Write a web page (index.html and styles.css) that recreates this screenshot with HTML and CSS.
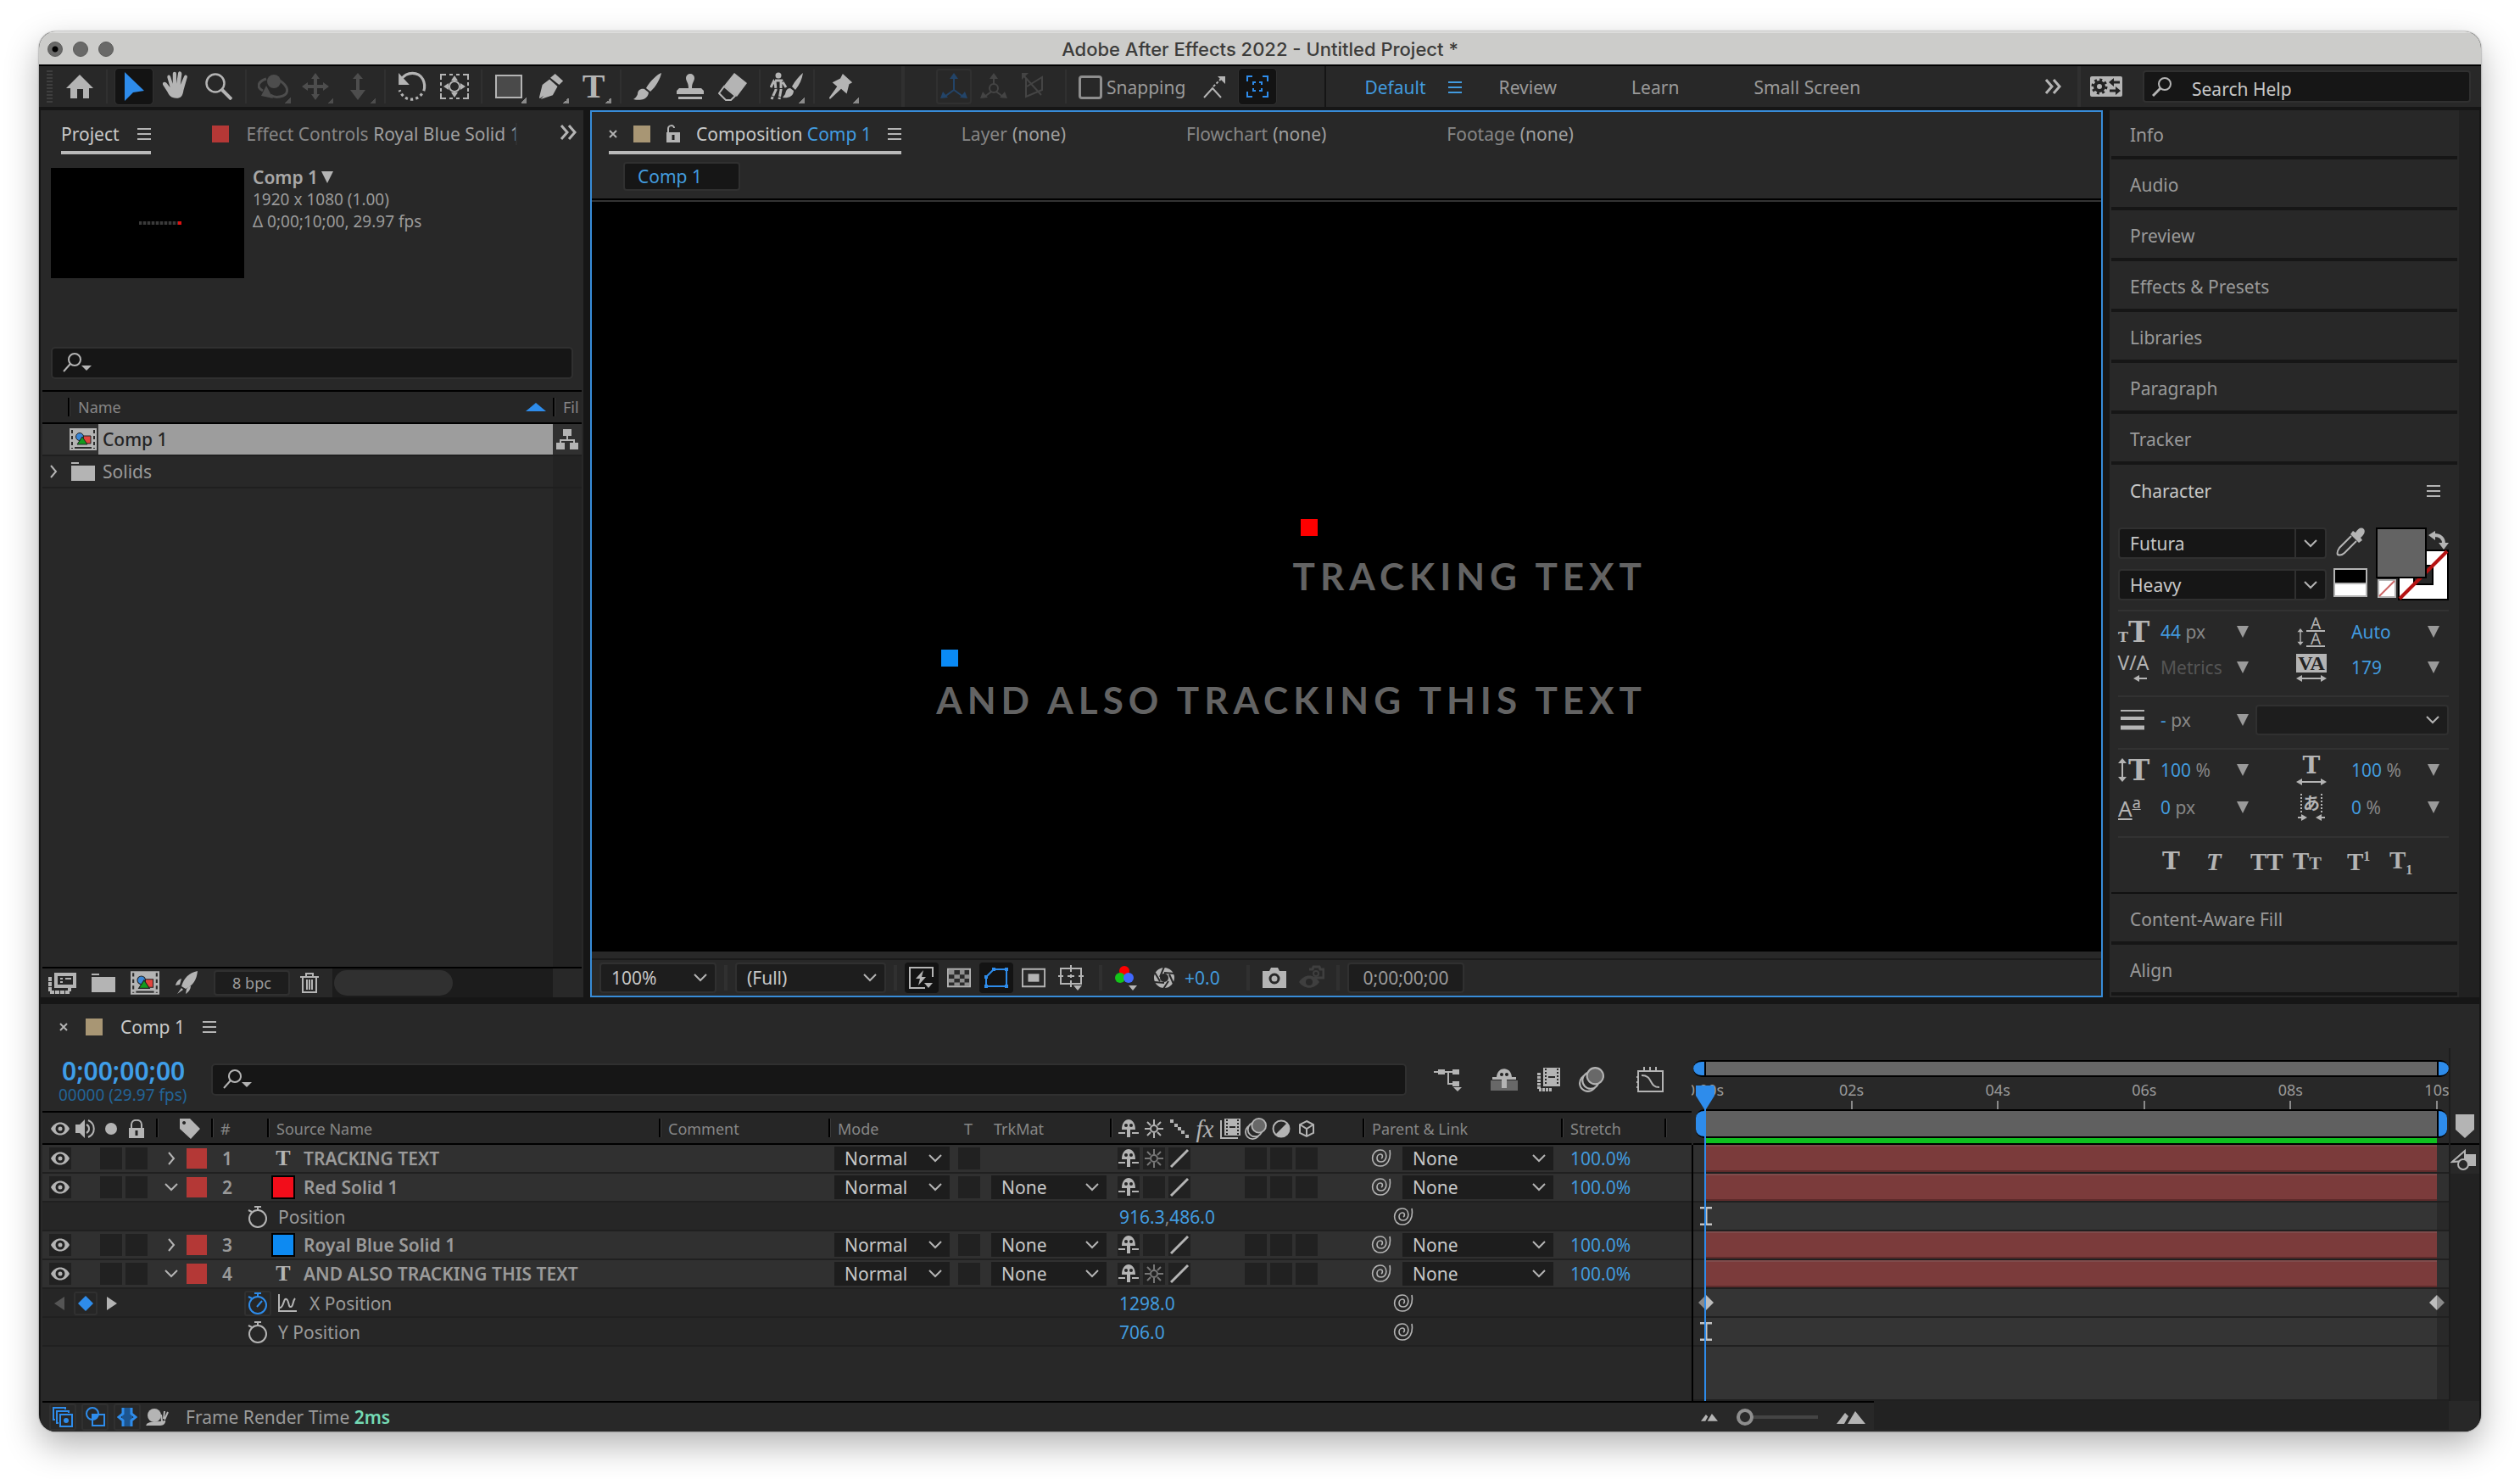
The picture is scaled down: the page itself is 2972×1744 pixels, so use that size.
FILE: index.html
```html
<!DOCTYPE html>
<html lang="en">
<head>
<meta charset="utf-8">
<meta name="viewport" content="width=device-width, initial-scale=1">
<title>Adobe After Effects 2022 - Untitled Project *</title>
<link rel="stylesheet" href="styles.css">
</head>
<body>
<svg class="defs" aria-hidden="true">
  <symbol id="chev" viewBox="0 0 16 16"><path d="M1 4l7 7 7-7" fill="none" stroke="currentColor" stroke-width="2"/></symbol>
  <symbol id="chev-r" viewBox="0 0 16 16"><path d="M5 1l6 7-6 7" fill="none" stroke="currentColor" stroke-width="2"/></symbol>
  <symbol id="menu" viewBox="0 0 16 16"><path d="M0 2h16M0 8h16M0 14h16" stroke="currentColor" stroke-width="2"/></symbol>
  <symbol id="tri" viewBox="0 0 12 12"><path d="M0 0h12L6 12z" fill="currentColor"/></symbol>
  <symbol id="close" viewBox="0 0 10 10"><path d="M1 1l8 8M9 1l-8 8" stroke="currentColor" stroke-width="2"/></symbol>
  <symbol id="more" viewBox="0 0 20 18"><path d="M2 1l7 8-7 8M11 1l7 8-7 8" fill="none" stroke="currentColor" stroke-width="3"/></symbol>
  <symbol id="mag" viewBox="0 0 34 24"><circle cx="14" cy="8" r="7" fill="none" stroke="currentColor" stroke-width="2"/><path d="M9 13L1 22" stroke="currentColor" stroke-width="2"/><path d="M22 15h12l-6 6z" fill="currentColor"/></symbol>
  <symbol id="find" viewBox="0 0 24 24"><circle cx="15" cy="9" r="7" fill="none" stroke="currentColor" stroke-width="2"/><path d="M10 14L1 23" stroke="currentColor" stroke-width="3"/></symbol>
  <symbol id="home" viewBox="0 0 32 32"><path d="M16 2l16 16h-5v12h-7v-11h-7v11H5V18H0z" fill="currentColor"/></symbol>
  <symbol id="arrow" viewBox="0 0 32 36"><path d="M5 1l23 22-13 2-10 10z" fill="currentColor"/></symbol>
  <symbol id="hand" viewBox="0 0 32 34"><path d="M9 18L6 7c-.5-3 2.500-4 3.500-1L12 14V3c0-3 4-3 4 0v11l2-12c.5-3 4-2 4 1l-1.500 12 4-9c1-3 4.500-1.500 3.500 1l-4 14c-1 7-3 9-8 9-6 0-8-3-10-7l-5-8c-1-3 2-4 4-2z" fill="currentColor"/></symbol>
  <symbol id="zoomt" viewBox="0 0 32 32"><circle cx="12" cy="12" r="10.500" fill="none" stroke="currentColor" stroke-width="2.500"/><path d="M20 20l11 11" stroke="currentColor" stroke-width="4"/></symbol>
  <symbol id="orbit" viewBox="0 0 36 32"><circle cx="19" cy="10" r="8" fill="currentColor"/><path d="M10 7c-10 3-12 10-4 14M26 9c12 8 11 17 0 19-4 1-8 0-11-2" fill="none" stroke="currentColor" stroke-width="3"/><path d="M10 15l8 15-14-3z" fill="currentColor"/></symbol>
  <symbol id="pan" viewBox="0 0 32 32"><path d="M16 0l5 7h-3v7h7v-3l7 5-7 5v-3h-7v7h3l-5 7-5-7h3v-7H7v3l-7-5 7-5v3h7V7h-3z" fill="currentColor"/></symbol>
  <symbol id="dolly" viewBox="0 0 32 32"><path d="M16 0l6 7h-4v13h7l-9 12-9-12h7V7h-4z" fill="currentColor"/></symbol>
  <symbol id="rotate" viewBox="0 0 34 34"><path d="M5 9C11 0 24 0 29 9c3 6 2 10 1 13" fill="none" stroke="currentColor" stroke-width="3"/><path d="M2 2v13h12z" fill="currentColor"/><path d="M28 25c-6 9-20 9-25-4" fill="none" stroke="currentColor" stroke-width="3" stroke-dasharray="3 3"/></symbol>
  <symbol id="anchor" viewBox="0 0 34 32"><path d="M1 8V2h6M27 2h6v6M33 24v6h-6M7 30H1v-6M11 2h4M19 2h4M11 30h4M19 30h4M1 11v4M1 18v4M33 11v4M33 18v4" fill="none" stroke="currentColor" stroke-width="2"/><circle cx="17" cy="16" r="6" fill="none" stroke="currentColor" stroke-width="2"/><path d="M17 3l4 6h-8zM17 29l4-6h-8zM4 16l6-4v8zM30 16l-6-4v8z" fill="currentColor"/></symbol>
  <symbol id="rect" viewBox="0 0 32 32"><path d="M1 3h30v26H1z" fill="#4a4a4a" stroke="currentColor" stroke-width="2"/></symbol>
  <symbol id="pen" viewBox="0 0 32 34"><path d="M21 1l10 9-5 5-11-9zM14 8l10 9-6 11L3 33l9-11a3 3 0 1 1 2 1L2 32 1 31l4-16z" fill="currentColor"/></symbol>
  <symbol id="brush" viewBox="0 0 34 34"><path d="M33 1c-4 1-14 10-18 18l5 4C27 17 32 7 33 1zM13 20c-5-1-8 2-8 6-1 3-3 5-5 6 7 2 17 1 18-8z" fill="currentColor"/></symbol>
  <symbol id="stamp" viewBox="0 0 32 32"><path d="M11 6a5 5 0 1 1 10 0c0 4-3 5-3 12h11l3 3v4H0v-4l3-3h11c0-7-3-8-3-12zM2 28h28v3H2z" fill="currentColor"/></symbol>
  <symbol id="eraser" viewBox="0 0 34 34"><path d="M19 1l15 12-12 16L7 16z" fill="currentColor"/><path d="M7 17l13 11-5 5H9l-8-8z" fill="none" stroke="currentColor" stroke-width="2"/></symbol>
  <symbol id="roto" viewBox="0 0 40 34"><circle cx="10" cy="4" r="3.500" fill="currentColor"/><path d="M1 18l4-8h9l5 8M6 10l1 11-5 11M13 10v11l-2 11" fill="none" stroke="currentColor" stroke-width="3" stroke-dasharray="9 1"/><path d="M39 1c-5 4-9 9-13 16l4 4c5-6 8-13 9-20zM24 19c-4 0-5 3-6 7l-3 4c6 1 13-1 13-8z" fill="currentColor"/></symbol>
  <symbol id="pin" viewBox="0 0 32 34"><path d="M18 1l12 11-4 2-3 12-7-6L2 33l-1-2 10-14-6-5 10-5z" fill="currentColor"/></symbol>
  <symbol id="ax1" viewBox="0 0 32 32"><path d="M16 5v15L5 28M16 20l11 8" fill="none" stroke="currentColor" stroke-width="2"/><path d="M16 0l5 7H11zM0 30l3-8 6 7zM32 30l-3-8-6 7z" fill="currentColor"/></symbol>
  <symbol id="ax2" viewBox="0 0 32 32"><use href="#ax1"/><circle cx="16" cy="18" r="5" fill="#282828" stroke="currentColor" stroke-width="2"/></symbol>
  <symbol id="ax3" viewBox="0 0 32 32"><path d="M7 6v22l19-8V5L8 16M5 4l20 22" fill="none" stroke="currentColor" stroke-width="2"/><path d="M2 0h8l-8 8z" fill="currentColor"/></symbol>
  <symbol id="snapa" viewBox="0 0 26 28"><path d="M1 27l10-11 10 11" fill="none" stroke="currentColor" stroke-width="2"/><path d="M12 14l9-9" stroke="currentColor" stroke-width="2" stroke-dasharray="3 2"/><path d="M17 2h9v9z" fill="currentColor"/></symbol>
  <symbol id="snapb" viewBox="0 0 26 26"><path d="M1 7V1h6M19 1h6v6M25 19v6h-6M7 25H1v-6M8 11V8h3M15 8h3v3M18 15v3h-3M11 18H8v-3" fill="none" stroke="currentColor" stroke-width="2"/></symbol>
  <symbol id="gears" viewBox="0 0 38 24"><rect width="38" height="24" rx="2" fill="#b4b4b4"/><circle cx="11" cy="12" r="5" fill="none" stroke="#222" stroke-width="4"/><circle cx="11" cy="12" r="8" fill="none" stroke="#222" stroke-width="3" stroke-dasharray="3 3.280"/><path d="M35 7h-7M23 17h7" stroke="#222" stroke-width="3"/><path d="M22 7l6-5v10zM36 17l-6-5v10z" fill="#222"/></symbol>
  <symbol id="unlock" viewBox="0 0 16 22"><path d="M2 10V5c0-5 7-5 7-1" fill="none" stroke="currentColor" stroke-width="2"/><path d="M0 9h16v12H0z" fill="currentColor"/><path d="M8 12v6" stroke="#222" stroke-width="3"/></symbol>
  <symbol id="lock" viewBox="0 0 20 22"><path d="M4 10V6c0-7 12-7 12 0v4" fill="none" stroke="currentColor" stroke-width="2"/><path d="M1 10h18v12H1z" fill="currentColor"/><path d="M10 13v6" stroke="#222" stroke-width="3"/></symbol>
  <symbol id="comp" viewBox="0 0 32 26"><path d="M0 0h32v26H0z" fill="#b4b4b4"/><path d="M3 2v22M29 2v22" stroke="#2b2b2b" stroke-width="2" stroke-dasharray="4 3"/><path d="M6 23h20" stroke="#2b2b2b" stroke-width="2"/><path d="M16 9h9v9h-9z" fill="#e2443e" stroke="#222"/><circle cx="12" cy="10" r="4.500" fill="#3a86d6" stroke="#222"/><path d="M15 10l6 9H9z" fill="#149a1e" stroke="#222"/></symbol>
  <symbol id="folder" viewBox="0 0 28 24"><path d="M0 1h9v2H0zM0 5h28v18H0z" fill="currentColor"/></symbol>
  <symbol id="flow" viewBox="0 0 26 24"><path d="M8 0h10v8H8zM0 16h10v8H0zM16 16h10v8H16z" fill="currentColor"/><path d="M13 8v4M5 16v-3h16v3" fill="none" stroke="currentColor" stroke-width="2"/></symbol>
  <symbol id="interp" viewBox="0 0 34 26"><path d="M10 3h22v14H10z" fill="none" stroke="currentColor" stroke-width="4"/><path d="M15 8h3M15 12h3M21 8h7" stroke="currentColor" stroke-width="2"/><path d="M3 6v18h23v-5" fill="none" stroke="currentColor" stroke-width="4" stroke-dasharray="5 1"/></symbol>
  <symbol id="rocket" viewBox="0 0 26 28"><path d="M26 0C16 2 10 8 7 18l5 3C21 17 25 10 26 0zM7 9c-4 1-6 4-7 8l5-1zM18 17c0 5-3 8-6 10l1-6zM7 20l-5 7 7-5z" fill="currentColor"/></symbol>
  <symbol id="trash" viewBox="0 0 22 26"><path d="M0 6h22M7 5V2h8v3" fill="none" stroke="currentColor" stroke-width="2"/><path d="M3 7v17h16V7M8 9v12M11 9v12M14 9v12" fill="none" stroke="currentColor" stroke-width="2"/></symbol>
  <symbol id="bolt" viewBox="0 0 30 26"><path d="M28 12V1H1v24h18" fill="none" stroke="currentColor" stroke-width="2"/><path d="M17 4L8 14h5l-2 8 9-10h-5z" fill="currentColor"/><path d="M18 19h10l-5 6z" fill="currentColor"/></symbol>
  <symbol id="checker" viewBox="0 0 30 24"><path d="M1 1h28v22H1z" fill="#2a2a2a" stroke="currentColor" stroke-width="2"/><path d="M2 2h7v6H2zM16 2h6v6h-6zM9 8h7v5H9zM22 8h6v5h-6zM2 13h7v5H2zM16 13h6v5h-6zM9 18h7v4H9zM22 18h6v4h-6z" fill="#8f8f8f"/></symbol>
  <symbol id="mask" viewBox="0 0 30 26"><path d="M3 23V12L12 3h15v20z" fill="none" stroke="currentColor" stroke-width="2"/><path d="M1 21h4v4H1zM1 10h4v4H1zM10 1h4v4h-4zM25 1h4v4h-4zM25 21h4v4h-4z" fill="currentColor"/></symbol>
  <symbol id="roi" viewBox="0 0 30 24"><path d="M1 1h28v22H1z" fill="none" stroke="currentColor" stroke-width="2"/><path d="M8 7h14v10H8z" fill="currentColor"/></symbol>
  <symbol id="guides" viewBox="0 0 30 30"><path d="M3 4h24v18H3zM15 0v8M15 11v4M15 18v8M0 13h6M11 13h8M24 13h6" fill="none" stroke="currentColor" stroke-width="2"/><path d="M18 24h10l-5 6z" fill="currentColor"/></symbol>
  <symbol id="rgb" viewBox="0 0 28 30"><circle cx="11" cy="7" r="6" fill="#f00"/><circle cx="6" cy="15" r="6" fill="#14c41a"/><circle cx="16" cy="15" r="6" fill="#4169ff"/><path d="M16 24h10l-5 6z" fill="#b4b4b4"/></symbol>
  <symbol id="aperture" viewBox="0 0 26 26"><circle cx="13" cy="13" r="8.500" fill="none" stroke="currentColor" stroke-width="7"/><path d="M13 0l-5 12M25 8L13 7M24 20l-5-11M12 26l6-9M1 18l12 1M2 7l6 10" stroke="#282828" stroke-width="2"/></symbol>
  <symbol id="camera" viewBox="0 0 28 24"><path d="M0 4h8l2-4h8l2 4h8v20H0z" fill="currentColor"/><circle cx="14" cy="13" r="5" fill="none" stroke="#282828" stroke-width="3"/></symbol>
  <symbol id="camghost" viewBox="0 0 30 28"><path d="M12 4h4l1-3h7l1 3h4v10H18" fill="none" stroke="currentColor" stroke-width="3"/><circle cx="20" cy="9" r="3" fill="none" stroke="currentColor" stroke-width="2"/><path d="M0 19c6-10 18-10 24 0-6 9-18 9-24 0z" fill="currentColor"/><circle cx="12" cy="19" r="4" fill="#282828"/></symbol>
  <symbol id="mini" viewBox="0 0 34 28"><path d="M0 5h8M12 5h10M17 5v14h6" fill="none" stroke="currentColor" stroke-width="2"/><path d="M5 2h8v6H5zM22 2h8v6h-8zM22 16h8v6h-8z" fill="currentColor"/><path d="M23 23h10l-5 5z" fill="currentColor"/></symbol>
  <symbol id="shy" viewBox="0 0 24 24"><path d="M4 13C4-3 20-3 20 13h-6v9h-4v-9z" fill="currentColor"/><circle cx="9" cy="8" r="2" fill="#222"/><circle cx="15" cy="8" r="2" fill="#222"/><path d="M0 17h8M16 17h8" stroke="currentColor" stroke-width="2"/></symbol>
  <symbol id="shybig" viewBox="0 0 32 26"><path d="M0 14h32v12H0z" fill="#686868"/><path d="M2 13v-3h5C8-3 24-3 25 10h5v3H19v10h-6V13z" fill="currentColor"/><circle cx="13" cy="7" r="2" fill="#222"/><circle cx="19" cy="7" r="2" fill="#222"/></symbol>
  <symbol id="film" viewBox="0 0 28 28"><path d="M8 0h20v22H8z" fill="currentColor"/><path d="M11 1v20M25 1v20" stroke="#282828" stroke-width="2" stroke-dasharray="2 2"/><path d="M14 11h8" stroke="#282828" stroke-width="2"/><path d="M3 6v20h16" fill="none" stroke="currentColor" stroke-width="4" stroke-dasharray="3 1"/></symbol>
  <symbol id="filmsm" viewBox="0 0 26 26"><path d="M6 1h19v20H6z" fill="currentColor"/><path d="M9 2v18M22 2v18" stroke="#282828" stroke-width="2" stroke-dasharray="2 2"/><path d="M12 11h7" stroke="#282828" stroke-width="2"/><path d="M2 3v21h20" fill="none" stroke="currentColor" stroke-width="2"/></symbol>
  <symbol id="blur" viewBox="0 0 28 28"><circle cx="10" cy="18" r="9" fill="none" stroke="currentColor" stroke-width="2"/><circle cx="13" cy="15" r="9" fill="#282828" stroke="currentColor" stroke-width="2"/><circle cx="18" cy="10" r="9" fill="#686868" stroke="currentColor" stroke-width="2"/></symbol>
  <symbol id="graph" viewBox="0 0 32 30"><path d="M2 5h29v24H2zM9 0v5M16 0v5M23 0v5M0 12h3M0 18h3M0 24h3" fill="none" stroke="currentColor" stroke-width="2"/><path d="M6 10c14 0 8 14 21 14" fill="none" stroke="currentColor" stroke-width="2"/></symbol>
  <symbol id="eye" viewBox="0 0 22 16"><path d="M0 8C5-2 17-2 22 8c-5 10-17 10-22 0z" fill="currentColor"/><circle cx="11" cy="8" r="4" fill="#b4b4b4" stroke="#222" stroke-width="3"/></symbol>
  <symbol id="speaker" viewBox="0 0 24 22"><path d="M0 6h5l6-6v22l-6-6H0z" fill="currentColor"/><path d="M13 6c4 2 4 8 0 10M15 1c9 4 9 16 0 20" fill="none" stroke="currentColor" stroke-width="2"/></symbol>
  <symbol id="dot" viewBox="0 0 14 14"><circle cx="7" cy="7" r="7" fill="currentColor"/></symbol>
  <symbol id="tag" viewBox="0 0 24 24"><path d="M0 0h12l12 12-11 12L0 12zM5 3a2 2 0 1 0 .1 0z" fill="currentColor" fill-rule="evenodd"/></symbol>
  <symbol id="sun" viewBox="0 0 22 22"><circle cx="11" cy="11" r="4" fill="none" stroke="currentColor" stroke-width="2"/><path d="M11 0v6M11 16v6M0 11h6M16 11h6M3 3l4 4M15 15l4 4M19 3l-4 4M3 19l4-4" stroke="currentColor" stroke-width="2"/></symbol>
  <symbol id="dots" viewBox="0 0 22 22"><path d="M0 0h4v4H0zM5 5h4v4H5zM9 9h4v4H9zM13 13h4v4h-4zM18 18h4v4h-4z" fill="currentColor"/></symbol>
  <symbol id="slash" viewBox="0 0 24 24"><path d="M2 22L22 2" stroke="currentColor" stroke-width="3"/></symbol>
  <symbol id="half" viewBox="0 0 22 22"><circle cx="11" cy="11" r="9.500" fill="#282828" stroke="currentColor" stroke-width="2"/><path d="M18 4A9.500 9.500 0 1 1 4 18z" fill="currentColor"/></symbol>
  <symbol id="cube" viewBox="0 0 20 22"><path d="M10 2l8 4v10l-8 4-8-4V6zM2 6l8 5 8-5M10 11v9" fill="none" stroke="currentColor" stroke-width="2"/></symbol>
  <symbol id="whip" viewBox="0 0 24 22"><path d="M22 1c2 11-3 19-11 19C-2 20-1 1 11 1c9 0 9 14 1 14-7 0-6-9-1-9 3 0 3 4 1 5" fill="none" stroke="currentColor" stroke-width="1.600"/></symbol>
  <symbol id="watch" viewBox="0 0 24 26"><circle cx="12" cy="15" r="10" fill="none" stroke="currentColor" stroke-width="2"/><path d="M12 5V1M8 1h8M1 5l4 2" stroke="currentColor" stroke-width="2"/></symbol>
  <symbol id="curve" viewBox="0 0 22 22"><path d="M1 0v20h21M2 16c5 0 4-12 8-10 3 2 2 10 5 9 3 0 2-7 5-10" fill="none" stroke="currentColor" stroke-width="2"/></symbol>
  <symbol id="left" viewBox="0 0 12 16"><path d="M12 0v16L0 8z" fill="currentColor"/></symbol>
  <symbol id="right" viewBox="0 0 12 16"><path d="M0 0v16l12-8z" fill="currentColor"/></symbol>
  <symbol id="diamond" viewBox="0 0 18 18"><path d="M9 0l9 9-9 9-9-9z" fill="currentColor"/></symbol>
  <symbol id="key" viewBox="0 0 18 18"><path d="M9 0v18L0 9z" fill="#8a8a8a"/><path d="M9 0v18l9-9z" fill="#bdbdbd"/></symbol>
  <symbol id="ibeam" viewBox="0 0 14 22"><path d="M0 1h14M0 21h14M7 1v20" stroke="#c4c4c4" stroke-width="3"/></symbol>
  <symbol id="layers" viewBox="0 0 24 24"><path d="M3 15H1V1h14v2M7 19H5V5h14v2" fill="none" stroke="currentColor" stroke-width="2"/><path d="M9 9h14v14H9z" fill="none" stroke="currentColor" stroke-width="2"/><circle cx="16" cy="16" r="3" fill="currentColor"/></symbol>
  <symbol id="modes" viewBox="0 0 24 24"><circle cx="9" cy="8" r="7" fill="none" stroke="currentColor" stroke-width="2"/><path d="M9 9h14v13H9z" fill="none" stroke="currentColor" stroke-width="2"/><path d="M9 9h7c0 4-3 6-7 6z" fill="currentColor"/></symbol>
  <symbol id="brack" viewBox="0 0 24 24"><path d="M6 1h12v22H6z" fill="#1c5590"/><path d="M7 1v7l-5 4 5 4v7M17 1v7l5 4-5 4v7" fill="none" stroke="currentColor" stroke-width="3"/></symbol>
  <symbol id="snail" viewBox="0 0 28 20"><circle cx="10" cy="8" r="8" fill="currentColor"/><path d="M1 20c2-6 14-1 18-5l-1-8M21 12l1-9M22 13l4-9" fill="none" stroke="currentColor" stroke-width="2"/><path d="M1 20c2-5 12-4 16-5 4 0 7-3 6 1-1 3-4 4-6 4z" fill="currentColor"/></symbol>
  <symbol id="mount" viewBox="0 0 34 16"><path d="M13 16L22 1l12 15zM0 16L10 3l4 4-5 9z" fill="currentColor"/></symbol>
  <symbol id="marker" viewBox="0 0 22 28"><path d="M0 0h22v18L11 28 0 18z" fill="currentColor"/></symbol>
  <symbol id="compbtn" viewBox="0 0 30 26"><path d="M16 6h14v14H18z" fill="currentColor"/><path d="M2 15L17 2v12z" fill="#282828" stroke="currentColor" stroke-width="2"/><circle cx="15" cy="18" r="6" fill="#282828" stroke="currentColor" stroke-width="2"/></symbol>
  <symbol id="dropper" viewBox="0 0 34 34"><path d="M33 2c-3-3-7-1-10 4l-3-2-3 4 10 10 4-3-2-3c4-3 6-7 4-10z" fill="currentColor"/><path d="M18 10L4 24c-2 3-3 6-2 8 3 1 6 0 8-2l14-14" fill="none" stroke="currentColor" stroke-width="2"/></symbol>
  <symbol id="swap" viewBox="0 0 24 22"><path d="M7 5c7 0 11 4 11 10" fill="none" stroke="currentColor" stroke-width="4"/><path d="M0 5l8-5v11zM12 14h12l-6 8z" fill="currentColor"/></symbol>
  <symbol id="udarrow" viewBox="0 0 10 28"><path d="M5 4v20" stroke="currentColor" stroke-width="2"/><path d="M5 0l5 6H0zM5 28l5-6H0z" fill="currentColor"/></symbol>
  <symbol id="lrarrow" viewBox="0 0 36 8"><path d="M4 4h28" stroke="currentColor" stroke-width="2"/><path d="M0 4l7-4v8zM36 4l-7-4v8z" fill="currentColor"/></symbol>
  <symbol id="inarrow" viewBox="0 0 36 8"><path d="M2 4h6M28 4h6" stroke="currentColor" stroke-width="2"/><path d="M13 4L6 0v8zM23 4l7-4v8z" fill="currentColor"/></symbol>
  <symbol id="larrow" viewBox="0 0 36 8"><path d="M21 4h13" stroke="currentColor" stroke-width="2"/><path d="M18 4l7-4v8z" fill="currentColor"/></symbol>
  <symbol id="strokes" viewBox="0 0 28 26"><path d="M0 2h28" stroke="currentColor" stroke-width="2"/><path d="M0 11h28" stroke="currentColor" stroke-width="4"/><path d="M0 22h28" stroke="currentColor" stroke-width="5"/></symbol>
</svg>

<div class="window">
  <header class="titlebar">
    <div class="lights"><i class="edited"></i><i></i><i></i></div>
    <h1>Adobe After Effects 2022 - Untitled Project *</h1>
  </header>

  <nav class="toolbar" aria-label="Tools">
    <i class="grip"></i>
    <button class="tool" aria-label="Home"><svg class="i32"><use href="#home"/></svg></button>
    <i class="sep"></i>
    <button class="tool on" aria-label="Selection"><svg class="i36"><use href="#arrow"/></svg></button>
    <button class="tool" aria-label="Hand"><svg class="i36"><use href="#hand"/></svg></button>
    <button class="tool" aria-label="Zoom"><svg class="i32"><use href="#zoomt"/></svg></button>
    <i class="sep"></i>
    <button class="tool dim more" aria-label="Orbit"><svg class="i36"><use href="#orbit"/></svg></button>
    <button class="tool dim more" aria-label="Pan"><svg class="i32"><use href="#pan"/></svg></button>
    <button class="tool dim more" aria-label="Dolly"><svg class="i32"><use href="#dolly"/></svg></button>
    <i class="sep"></i>
    <button class="tool" aria-label="Rotate"><svg class="i36"><use href="#rotate"/></svg></button>
    <button class="tool" aria-label="Anchor point"><svg class="i34"><use href="#anchor"/></svg></button>
    <i class="sep"></i>
    <button class="tool more" aria-label="Rectangle"><svg class="i32"><use href="#rect"/></svg></button>
    <button class="tool more" aria-label="Pen"><svg class="i32"><use href="#pen"/></svg></button>
    <button class="tool more type">T</button>
    <i class="sep"></i>
    <button class="tool" aria-label="Brush"><svg class="i34"><use href="#brush"/></svg></button>
    <button class="tool" aria-label="Clone stamp"><svg class="i32"><use href="#stamp"/></svg></button>
    <button class="tool" aria-label="Eraser"><svg class="i34"><use href="#eraser"/></svg></button>
    <i class="sep"></i>
    <button class="tool more" aria-label="Roto brush"><svg class="i40"><use href="#roto"/></svg></button>
    <i class="sep"></i>
    <button class="tool more" aria-label="Puppet pin"><svg class="i32"><use href="#pin"/></svg></button>
    <i class="sep wide"></i>
    <div class="axes">
      <button class="axis a-on" aria-label="Local axis"><svg class="i32"><use href="#ax1"/></svg></button>
      <button class="axis" aria-label="World axis"><svg class="i32"><use href="#ax2"/></svg></button>
      <button class="axis" aria-label="View axis"><svg class="i32"><use href="#ax3"/></svg></button>
    </div>
    <i class="sep"></i>
    <label class="snap"><input type="checkbox">Snapping</label>
    <button class="plain snapa" aria-label="Snap edges"><svg class="i28"><use href="#snapa"/></svg></button>
    <button class="tool on" aria-label="Snap features"><svg class="i26"><use href="#snapb"/></svg></button>
    <div class="workspaces">
      <a href="#default" class="current">Default <svg class="i16"><use href="#menu"/></svg></a>
      <a href="#review">Review</a>
      <a href="#learn">Learn</a>
      <a href="#small">Small Screen</a>
    </div>
    <button class="plain" aria-label="More workspaces"><svg class="i20"><use href="#more"/></svg></button>
    <i class="sep wide tight"></i>
    <button class="plain" aria-label="Sync settings"><svg class="gearbox"><use href="#gears"/></svg></button>
    <label class="help"><svg class="i24"><use href="#find"/></svg><input type="text" value="Search Help" aria-label="Search Help"></label>
  </nav>

  <main class="workspace">
    <section class="panel project">
      <div class="tabs">
        <a href="#project" class="tab active">Project <svg class="i16"><use href="#menu"/></svg></a>
        <a href="#effects" class="tab effects"><i class="sq red"></i><span>Effect Controls <b>Royal Blue Solid 1</b></span></a>
        <button class="plain" aria-label="More panels"><svg class="i20"><use href="#more"/></svg></button>
      </div>
      <div class="preview">
        <div class="thumb"><i class="line"></i><i class="spot"></i></div>
        <div class="meta">
          <strong>Comp 1 <svg class="i14"><use href="#tri"/></svg></strong>
          <span>1920 x 1080 (1.00)</span>
          <span>Δ 0;00;10;00, 29.97 fps</span>
        </div>
      </div>
      <label class="search"><svg class="mag"><use href="#mag"/></svg><input type="text" aria-label="Search project"></label>
      <div class="itembox">
        <table class="items">
          <colgroup><col class="c-ico"><col><col class="c-type"></colgroup>
          <thead><tr><th></th><th class="s"><span class="between">Name <svg class="sort"><path d="M0 10L12 0l12 10z" fill="#2e8ceb"/></svg></span></th><th class="s">Fil</th></tr></thead>
          <tbody>
            <tr class="sel-row"><td><span class="cell"><svg class="compico"><use href="#comp"/></svg></span></td><td>Comp 1</td><td><svg class="flowico"><use href="#flow"/></svg></td></tr>
            <tr><td><span class="cell"><svg class="i16"><use href="#chev-r"/></svg><svg class="folderico"><use href="#folder"/></svg></span></td><td>Solids</td><td></td></tr>
            <tr class="rest"><td></td><td></td><td></td></tr>
          </tbody>
        </table>
      </div>
      <footer class="projbar">
        <button class="plain" aria-label="Interpret footage"><svg class="i34"><use href="#interp"/></svg></button>
        <button class="plain" aria-label="New folder"><svg class="i28"><use href="#folder"/></svg></button>
        <button class="plain" aria-label="New composition"><svg class="i34"><use href="#comp"/></svg></button>
        <button class="plain" aria-label="Adjust"><svg class="i28"><use href="#rocket"/></svg></button>
        <button class="bpc">8 bpc</button>
        <button class="plain" aria-label="Delete"><svg class="i26"><use href="#trash"/></svg></button>
        <div class="scroll"><i></i></div>
      </footer>
    </section>

    <section class="panel viewer">
      <div class="tabs">
        <a href="#comp" class="tab active"><svg class="i10"><use href="#close"/></svg><i class="sq tan"></i><svg class="unlock"><use href="#unlock"/></svg><span>Composition <em>Comp 1</em></span><svg class="i16"><use href="#menu"/></svg></a>
        <a href="#layer" class="tab idle">Layer <b>(none)</b></a>
        <a href="#flowchart" class="tab idle">Flowchart <b>(none)</b></a>
        <a href="#footage" class="tab idle">Footage <b>(none)</b></a>
      </div>
      <div class="crumbs"><button>Comp 1</button></div>
      <div class="stage">
        <i class="solid s-red"></i><p class="t1">TRACKING TEXT</p>
        <i class="solid s-blue"></i><p class="t2">AND ALSO TRACKING THIS TEXT</p>
      </div>
      <footer class="viewbar">
        <span class="pick p-zoom"><select aria-label="Magnification"><option>100%</option></select><svg class="i16"><use href="#chev"/></svg></span>
        <i class="sep"></i>
        <span class="pick p-res"><select aria-label="Resolution"><option>(Full)</option></select><svg class="i16"><use href="#chev"/></svg></span>
        <i class="sep"></i>
        <button class="vb dark" aria-label="Fast previews"><svg class="i30"><use href="#bolt"/></svg></button>
        <button class="vb" aria-label="Transparency grid"><svg class="i28"><use href="#checker"/></svg></button>
        <button class="vb dark blue-ico" aria-label="Mask visibility"><svg class="i30"><use href="#mask"/></svg></button>
        <button class="vb" aria-label="Region of interest"><svg class="i28"><use href="#roi"/></svg></button>
        <button class="vb" aria-label="Guides"><svg class="i30"><use href="#guides"/></svg></button>
        <i class="sep"></i>
        <button class="vb" aria-label="Channels"><svg class="i30"><use href="#rgb"/></svg></button>
        <button class="vb" aria-label="Exposure"><svg class="i26"><use href="#aperture"/></svg></button>
        <span class="expo">+0.0</span>
        <i class="sep"></i>
        <button class="vb" aria-label="Snapshot"><svg class="i28"><use href="#camera"/></svg></button>
        <button class="vb faint" aria-label="Show snapshot"><svg class="i30"><use href="#camghost"/></svg></button>
        <i class="sep"></i>
        <button class="time">0;00;00;00</button>
      </footer>
    </section>

    <aside class="side">
      <div class="stack">
        <button class="acc">Info</button>
        <button class="acc">Audio</button>
        <button class="acc">Preview</button>
        <button class="acc">Effects &amp; Presets</button>
        <button class="acc">Libraries</button>
        <button class="acc">Paragraph</button>
        <button class="acc">Tracker</button>
        <section class="character">
          <h2>Character <svg class="i16"><use href="#menu"/></svg></h2>
          <div class="fontrow">
            <div class="fonts">
              <span class="pick split"><select aria-label="Font family"><option>Futura</option></select><svg class="i16"><use href="#chev"/></svg></span>
              <span class="pick split"><select aria-label="Font style"><option>Heavy</option></select><svg class="i16"><use href="#chev"/></svg></span>
            </div>
            <div class="inks">
              <button class="plain" aria-label="Eyedropper"><svg class="i34"><use href="#dropper"/></svg></button>
              <button class="bw" aria-label="Black and white"></button>
            </div>
            <div class="swatches">
              <svg class="stroke-sw" viewBox="0 0 60 60"><path d="M1 1h58v58H1z" fill="#fff" stroke="#000" stroke-width="2"/><path d="M19 19h22v22H19z" fill="#282828" stroke="#000" stroke-width="2"/><path d="M2 58L58 2" stroke="#b51313" stroke-width="4"/></svg>
              <i class="fill-sw"></i>
              <svg class="none-sw" viewBox="0 0 22 22"><path d="M1 1h20v20H1z" fill="#fff" stroke="#b4b4b4" stroke-width="2"/><path d="M2 20L20 2" stroke="#c66" stroke-width="2"/></svg>
              <svg class="swap-sw"><use href="#swap"/></svg>
            </div>
          </div>
          <div class="metrics m1">
            <span class="ti"><small>T</small>T</span><span class="val">44 <i>px</i></span><svg class="i12"><use href="#tri"/></svg>
            <span class="lead"><svg class="ud"><use href="#udarrow"/></svg><span><u>A</u><u>A</u></span></span><span class="val">Auto</span><svg class="i12"><use href="#tri"/></svg>
            <span class="track kern"><span>V/A</span><svg class="lr"><use href="#larrow"/></svg></span><span class="val off">Metrics</span><svg class="i12"><use href="#tri"/></svg>
            <span class="track"><b>VA</b><svg class="lr"><use href="#lrarrow"/></svg></span><span class="val">179</span><svg class="i12"><use href="#tri"/></svg>
          </div>
          <div class="metrics m2">
            <svg class="i28"><use href="#strokes"/></svg><span class="val">- <i>px</i></span><svg class="i12"><use href="#tri"/></svg>
            <span class="pick empty"><select aria-label="Stroke order"><option></option></select><svg class="i16"><use href="#chev"/></svg></span>
          </div>
          <div class="metrics m3">
            <span class="ti"><svg class="ud"><use href="#udarrow"/></svg>T</span><span class="val">100 <i>%</i></span><svg class="i12"><use href="#tri"/></svg>
            <span class="track"><span>T</span><svg class="lr"><use href="#lrarrow"/></svg></span><span class="val">100 <i>%</i></span><svg class="i12"><use href="#tri"/></svg>
            <span class="base"><u>A</u><sup>a</sup></span><span class="val">0 <i>px</i></span><svg class="i12"><use href="#tri"/></svg>
            <span class="track tsume"><span>あ</span><svg class="lr"><use href="#inarrow"/></svg></span><span class="val">0 <i>%</i></span><svg class="i12"><use href="#tri"/></svg>
          </div>
          <div class="faux">
            <button class="heavy">T</button><button class="ital">T</button><button>TT</button><button>T<small>T</small></button><button>T<sup>1</sup></button><button>T<sub>1</sub></button>
          </div>
        </section>
        <button class="acc">Content-Aware Fill</button>
        <button class="acc">Align</button>
      </div>
    </aside>
  </main>

  <section class="timeline">
    <div class="tabs">
      <a href="#tl" class="tab"><svg class="i10"><use href="#close"/></svg><i class="sq tan"></i>Comp 1 <svg class="i16"><use href="#menu"/></svg></a>
    </div>
    <div class="tl">
      <div class="tl-left">
        <div class="tl-head">
          <div class="clock"><strong>0;00;00;00</strong><span>00000 (29.97 fps)</span></div>
          <label class="search"><svg class="mag"><use href="#mag"/></svg><input type="text" aria-label="Search layers"></label>
          <div class="tl-tools">
            <button class="plain" aria-label="Mini flowchart"><svg class="i34"><use href="#mini"/></svg></button>
            <button class="plain" aria-label="Shy layers"><svg class="i32"><use href="#shybig"/></svg></button>
            <button class="plain" aria-label="Frame blending"><svg class="i28"><use href="#film"/></svg></button>
            <button class="plain" aria-label="Motion blur"><svg class="i30"><use href="#blur"/></svg></button>
            <button class="plain" aria-label="Graph editor"><svg class="i32"><use href="#graph"/></svg></button>
          </div>
        </div>
        <table class="layers">
          <colgroup><col class="k1"><col class="k2"><col class="k3"><col><col class="k5"><col class="k6"><col class="k7"><col class="k8"><col class="k9"><col class="k10"><col class="k11"><col class="k12"></colgroup>
          <thead><tr>
            <th><span class="grid"><i><svg class="i22"><use href="#eye"/></svg></i><i><svg class="i24"><use href="#speaker"/></svg></i><i><svg class="i14"><use href="#dot"/></svg></i><i><svg class="i22"><use href="#lock"/></svg></i></span></th>
            <th class="s"><svg class="i24 tagico"><use href="#tag"/></svg></th><th class="s">#</th><th class="s">Source Name</th><th class="s">Comment</th><th class="s">Mode</th><th>T</th><th>TrkMat</th>
            <th class="s"><span class="grid"><i><svg class="i24"><use href="#shy"/></svg></i><i><svg class="i22"><use href="#sun"/></svg></i><i><svg class="i22"><use href="#dots"/></svg></i><i class="fx">fx</i><i><svg class="i26"><use href="#filmsm"/></svg></i><i><svg class="i26"><use href="#blur"/></svg></i><i><svg class="i22"><use href="#half"/></svg></i><i><svg class="i22"><use href="#cube"/></svg></i></span></th>
            <th class="s">Parent &amp; Link</th><th class="s">Stretch</th><th class="s"></th>
          </tr></thead>
          <tbody>
            <tr class="layer">
              <td><span class="grid"><i class="box"><svg class="i22"><use href="#eye"/></svg></i><i></i><i class="box"></i><i class="box"></i></span></td>
              <td><span class="lab"><svg class="i16"><use href="#chev-r"/></svg><i></i></span></td><td class="num">1</td>
              <td><span class="name"><i class="tico">T</i>TRACKING TEXT</span></td><td></td>
              <td><span class="pick flat"><select aria-label="Mode 1"><option>Normal</option></select><svg class="i16"><use href="#chev"/></svg></span></td>
              <td><i class="box"></i></td><td></td>
              <td><span class="grid"><i class="box"><svg class="i24"><use href="#shy"/></svg></i><i class="box off"><svg class="i22"><use href="#sun"/></svg></i><i class="box"><svg class="i24"><use href="#slash"/></svg></i><i></i><i></i><i class="box"></i><i class="box"></i><i class="box"></i></span></td>
              <td><span class="parent"><svg class="i24"><use href="#whip"/></svg><span class="pick flat"><select aria-label="Parent 1"><option>None</option></select><svg class="i16"><use href="#chev"/></svg></span></span></td>
              <td class="blue">100.0%</td><td></td>
            </tr>
            <tr class="layer">
              <td><span class="grid"><i class="box"><svg class="i22"><use href="#eye"/></svg></i><i></i><i class="box"></i><i class="box"></i></span></td>
              <td><span class="lab"><svg class="i16"><use href="#chev"/></svg><i></i></span></td><td class="num">2</td>
              <td><span class="name"><i class="sw-red"></i>Red Solid 1</span></td><td></td>
              <td><span class="pick flat"><select aria-label="Mode 2"><option>Normal</option></select><svg class="i16"><use href="#chev"/></svg></span></td>
              <td><i class="box"></i></td>
              <td><span class="pick flat"><select aria-label="Track matte 2"><option>None</option></select><svg class="i16"><use href="#chev"/></svg></span></td>
              <td><span class="grid"><i class="box"><svg class="i24"><use href="#shy"/></svg></i><i class="box"></i><i class="box"><svg class="i24"><use href="#slash"/></svg></i><i></i><i></i><i class="box"></i><i class="box"></i><i class="box"></i></span></td>
              <td><span class="parent"><svg class="i24"><use href="#whip"/></svg><span class="pick flat"><select aria-label="Parent 2"><option>None</option></select><svg class="i16"><use href="#chev"/></svg></span></span></td>
              <td class="blue">100.0%</td><td></td>
            </tr>
            <tr class="prop">
              <td></td><td></td><td colspan="2"><span class="pname"><i><svg class="i26"><use href="#watch"/></svg></i>Position</span></td><td></td><td></td><td></td><td></td>
              <td class="blue">916.3<b>,</b>486.0</td><td><svg class="i24 pw"><use href="#whip"/></svg></td><td></td><td></td>
            </tr>
            <tr class="layer">
              <td><span class="grid"><i class="box"><svg class="i22"><use href="#eye"/></svg></i><i></i><i class="box"></i><i class="box"></i></span></td>
              <td><span class="lab"><svg class="i16"><use href="#chev-r"/></svg><i></i></span></td><td class="num">3</td>
              <td><span class="name"><i class="sw-blue"></i>Royal Blue Solid 1</span></td><td></td>
              <td><span class="pick flat"><select aria-label="Mode 3"><option>Normal</option></select><svg class="i16"><use href="#chev"/></svg></span></td>
              <td><i class="box"></i></td>
              <td><span class="pick flat"><select aria-label="Track matte 3"><option>None</option></select><svg class="i16"><use href="#chev"/></svg></span></td>
              <td><span class="grid"><i class="box"><svg class="i24"><use href="#shy"/></svg></i><i class="box"></i><i class="box"><svg class="i24"><use href="#slash"/></svg></i><i></i><i></i><i class="box"></i><i class="box"></i><i class="box"></i></span></td>
              <td><span class="parent"><svg class="i24"><use href="#whip"/></svg><span class="pick flat"><select aria-label="Parent 3"><option>None</option></select><svg class="i16"><use href="#chev"/></svg></span></span></td>
              <td class="blue">100.0%</td><td></td>
            </tr>
            <tr class="layer">
              <td><span class="grid"><i class="box"><svg class="i22"><use href="#eye"/></svg></i><i></i><i class="box"></i><i class="box"></i></span></td>
              <td><span class="lab"><svg class="i16"><use href="#chev"/></svg><i></i></span></td><td class="num">4</td>
              <td><span class="name"><i class="tico">T</i>AND ALSO TRACKING THIS TEXT</span></td><td></td>
              <td><span class="pick flat"><select aria-label="Mode 4"><option>Normal</option></select><svg class="i16"><use href="#chev"/></svg></span></td>
              <td><i class="box"></i></td>
              <td><span class="pick flat"><select aria-label="Track matte 4"><option>None</option></select><svg class="i16"><use href="#chev"/></svg></span></td>
              <td><span class="grid"><i class="box"><svg class="i24"><use href="#shy"/></svg></i><i class="box off"><svg class="i22"><use href="#sun"/></svg></i><i class="box"><svg class="i24"><use href="#slash"/></svg></i><i></i><i></i><i class="box"></i><i class="box"></i><i class="box"></i></span></td>
              <td><span class="parent"><svg class="i24"><use href="#whip"/></svg><span class="pick flat"><select aria-label="Parent 4"><option>None</option></select><svg class="i16"><use href="#chev"/></svg></span></span></td>
              <td class="blue">100.0%</td><td></td>
            </tr>
            <tr class="prop">
              <td><span class="keys"><svg class="i16 off"><use href="#left"/></svg><i><svg class="i18"><use href="#diamond"/></svg></i><svg class="i16"><use href="#right"/></svg></span></td><td></td>
              <td colspan="2"><span class="pname"><i class="on"><svg class="i26" viewBox="0 0 24 26"><use href="#watch" width="24" height="26"/><path d="M11 17l6-7" stroke="currentColor" stroke-width="2"/></svg></i><svg class="i22"><use href="#curve"/></svg><span class="xp">X Position</span></span></td><td></td><td></td><td></td><td></td>
              <td class="blue">1298.0</td><td><svg class="i24 pw"><use href="#whip"/></svg></td><td></td><td></td>
            </tr>
            <tr class="prop">
              <td></td><td></td><td colspan="2"><span class="pname"><i><svg class="i26"><use href="#watch"/></svg></i>Y Position</span></td><td></td><td></td><td></td><td></td>
              <td class="blue">706.0</td><td><svg class="i24 pw"><use href="#whip"/></svg></td><td></td><td></td>
            </tr>
          </tbody>
        </table>
        <footer class="status">
          <button class="sb" aria-label="Layer switches"><svg class="i24"><use href="#layers"/></svg></button>
          <button class="sb" aria-label="Transfer controls"><svg class="i24"><use href="#modes"/></svg></button>
          <button class="sb" aria-label="In and out"><svg class="i24"><use href="#brack"/></svg></button>
          <svg class="i28"><use href="#snail"/></svg>
          <span>Frame Render Time <b>2ms</b></span>
        </footer>
      </div>

      <div class="tl-right">
        <div class="time-area">
          <div class="navbar"><i></i></div>
          <div class="ruler">
            <span>0:00s<i></i></span><span>02s<i></i></span><span>04s<i></i></span><span>06s<i></i></span><span>08s<i></i></span><span>10s<i></i></span>
          </div>
          <div class="workarea"><i></i></div>
          <div class="cache"><i></i></div>
          <div class="tracks">
            <div class="lane"><i class="bar"></i></div>
            <div class="lane"><i class="bar"></i></div>
            <div class="lane p"><span><svg class="ib"><use href="#ibeam"/></svg></span></div>
            <div class="lane"><i class="bar"></i></div>
            <div class="lane"><i class="bar"></i></div>
            <div class="lane p"><span><svg class="i18"><use href="#key"/></svg></span><span class="flip"><svg class="i18"><use href="#key"/></svg></span></div>
            <div class="lane p"><span><svg class="ib"><use href="#ibeam"/></svg></span></div>
            <div class="lane p fillout"></div>
          </div>
          <div class="playhead"><svg viewBox="0 0 22 28"><path d="M0 0h22v12L12 28h-2L0 12z" fill="#2e8ceb"/></svg></div>
        </div>
        <div class="gutter">
          <div class="g-top"><svg class="i28"><use href="#marker"/></svg></div>
          <div class="g-btn"><svg class="i30"><use href="#compbtn"/></svg></div>
          <div class="g-scroll"></div>
        </div>
        <footer class="zoombar">
          <div class="zoomer"><svg class="m-s"><use href="#mount"/></svg><input type="range" min="0" max="100" value="0" aria-label="Time zoom"><svg class="m-b"><use href="#mount"/></svg></div>
          <div class="hscroll"></div>
        </footer>
      </div>
    </div>
  </section>
</div>
</body>
</html>
```
FILE: styles.css
```css
:root {
  --panel: #282828;
  --gap: #161616;
  --field: #161616;
  --line: #323232;
  --text: #9a9a9a;
  --bright: #c8c8c8;
  --icon: #b4b4b4;
  --blue: #429bdf;
  --accent: #2e8ceb;
}
* { box-sizing: border-box; }
body {
  margin: 0;
  min-height: 100vh;
  display: flex;
  padding: 37px 46px 56px;
  background: #fff;
  color: var(--text);
  font: 21px/26px "Noto Sans", "Open Sans", "Noto Sans CJK JP", sans-serif;
}
button, input, select { font: inherit; color: inherit; margin: 0; border: 0; padding: 0; background: none; border-radius: 0; outline: 0; }
a { color: inherit; text-decoration: none; }
i, em { font-style: normal; }
b { font-weight: 400; }
h1, h2, p { margin: 0; font-weight: 400; }
svg { display: block; flex: none; color: var(--icon); }
.defs { width: 0; height: 0; position: absolute; }
.i10 { width: 10px; height: 10px; }
.i12 { width: 12px; height: 12px; }
.i14 { width: 14px; height: 14px; }
.i16 { width: 16px; height: 16px; }
.i18 { width: 18px; height: 18px; }
.i20 { width: 20px; height: 20px; }
.i22 { width: 22px; height: 22px; }
.i24 { width: 24px; height: 24px; }
.i26 { width: 26px; height: 26px; }
.i28 { width: 28px; height: 28px; }
.i30 { width: 30px; height: 30px; }
.i32 { width: 32px; height: 32px; }
.i34 { width: 34px; height: 34px; }
.i36 { width: 36px; height: 36px; }
.i40 { width: 40px; height: 36px; }
.mag { width: 34px; height: 24px; }

.window {
  flex: 1;
  min-width: 0;
  display: flex;
  flex-direction: column;
  background: var(--gap);
  border-radius: 20px;
  overflow: hidden;
  box-shadow: 0 0 2px rgba(0,0,0,.6), 0 16px 40px rgba(0,0,0,.3);
}
.titlebar {
  display: grid;
  grid-template-columns: 1fr auto 1fr;
  align-items: center;
  height: 41px;
  border-top: 2px solid #dcdcdb;
  border-bottom: 2px solid #000;
  background: #ccccca;
}
.titlebar h1 { font: 500 22px/26px Inter, "Liberation Sans", sans-serif; color: #3c3c3b; }
.lights { display: flex; gap: 12px; padding-left: 10px; }
.lights i { width: 18px; height: 18px; border-radius: 50%; background: #696968; border: 1px solid #5a5a59; }
.lights .edited { background: radial-gradient(circle, #000 3px, #696968 4px); }

.toolbar { display: flex; align-items: center; height: 48px; padding: 0 12px 0 9px; background: var(--panel); }
.grip { width: 7px; height: 38px; margin-right: 7px; background: repeating-linear-gradient(#3e3e3e 0 2px, transparent 2px 4px); }
.tool { width: 44px; height: 42px; margin: 0 3px; display: flex; align-items: center; justify-content: center; border-radius: 4px; }
.tool.on { background: #131313; outline: 1px solid #303030; }
.tool.on svg { color: var(--accent); }
.tool.dim svg { color: #4d4d4d; }
.tool.more { background: linear-gradient(135deg, transparent 50%, #8a8a8a 50%) right 1px bottom 1px / 7px 7px no-repeat; }
.tool.dim.more { background-image: linear-gradient(135deg, transparent 50%, #4d4d4d 50%); }
.tool.type { font: 700 40px/40px "Liberation Serif", serif; color: var(--icon); }
.plain { display: flex; align-items: center; justify-content: center; }
.sep { flex: none; width: 2px; height: 40px; margin: 0 6px; background: #303030; }
.sep.wide { width: 4px; height: 48px; margin: 0 37px 0 46px; }
.sep.wide.tight { margin: 0 11px 0 19px; }
.axes { display: flex; gap: 5px; }
.axis { width: 42px; height: 42px; display: flex; align-items: center; justify-content: center; border-radius: 4px; }
.axis svg { color: #444; }
.axis.a-on { border: 2px solid #303030; }
.axis.a-on svg { color: #234468; }
.axes + .sep { margin-left: 16px; }
.snap { display: flex; align-items: center; gap: 5px; padding: 2px 0 0 8px; }
.snap input { appearance: none; width: 28px; height: 28px; border: 3px solid #8e8e8e; border-radius: 4px; }
.snapa { margin: 0 12px 0 20px; }
.workspaces { flex: 1; display: flex; align-items: center; height: 48px; padding: 2px 0 0 45px; margin-left: 54px; border-left: 2px solid #151515; gap: 88px; }
.workspaces a { display: flex; align-items: center; gap: 26px; }
.workspaces a:nth-child(2) { margin-left: -44px; }
.workspaces .current, .workspaces .current svg { color: var(--blue); }
.gearbox { width: 38px; height: 24px; }
.help { display: flex; align-items: center; width: 387px; height: 38px; margin-left: 24px; padding-left: 9px; gap: 23px; border: 2px solid #303030; border-radius: 4px; background: var(--field); color: var(--bright); }
.help input { width: 100%; min-width: 0; flex: 1; padding-top: 5px; }

.workspace { flex: 1; display: flex; gap: 8px; padding: 4px 2px 8px; }
.panel { display: flex; flex-direction: column; background: var(--panel); }
.tabs { display: flex; align-items: stretch; height: 52px; padding-top: 8px; }
.tab { display: flex; align-items: center; white-space: nowrap; border-bottom: 4px solid transparent; }
.tab.active { color: var(--bright); border-color: #b9b9b9; }
.tab b { color: #9f9f9f; }
.sq { flex: none; width: 20px; height: 20px; }
.red { background: #b43836; }
.tan { background: #a89674; }

.project { width: 640px; }
.project .tabs { padding-left: 24px; }
.project .tab.active { gap: 21px; }
.effects { flex: 1; gap: 21px; margin-left: 72px; color: #868686; overflow: hidden; }
.effects span { width: 319px; overflow: hidden; border-right: 2px solid #303030; }
.project .tabs > button { margin: 0 8px 8px 0; }
.preview { display: flex; gap: 10px; padding: 16px 12px 0; height: 227px; }
.thumb { flex: none; display: flex; align-items: center; justify-content: center; width: 228px; height: 130px; padding-left: 30px; background: #000; }
.thumb .line { width: 46px; height: 4px; background: repeating-linear-gradient(90deg, #3a3a3a 0 3px, #111 3px 5px); }
.thumb .spot { width: 4px; height: 4px; background: #d11; }
.meta { display: flex; flex-direction: column; font-size: 19px; line-height: 26px; }
.meta strong { display: flex; align-items: center; gap: 4px; height: 22px; margin-bottom: 2px; font-size: 21px; font-weight: 600; color: #a8a8a8; }
.search { display: flex; align-items: center; height: 38px; padding-left: 12px; border: 2px solid #303030; border-radius: 5px; background: var(--field); }
.search input { flex: 1; min-width: 0; }
.project .search { margin: 0 12px 13px; }
table { border-spacing: 0; table-layout: fixed; width: 100%; }
th, td { padding: 0; text-align: left; font-weight: 400; }
th { height: 40px; border-top: 2px solid #000; border-bottom: 2px solid #000; font-size: 18px; color: #868686; background: #262626; }
th.s { background: linear-gradient(#000, #000) left center / 2px 22px no-repeat, linear-gradient(#3a3a3a, #3a3a3a) 2px center / 1px 22px no-repeat #262626; }
.itembox { flex: 1; display: flex; padding: 0 2px; }
.c-ico { width: 30px; }
.c-type { width: 34px; }
.between { display: flex; align-items: center; justify-content: space-between; padding: 0 8px 0 12px; }
.sort { width: 24px; height: 10px; }
.items th:last-child { padding-left: 12px; overflow: hidden; }
.items td { height: 38px; border-bottom: 2px solid #1f1f1f; }
.items td:nth-child(2) { padding-left: 41px; }
.items td:last-child { background: #232323; padding-left: 4px; }
.items .sel-row td { background: #303030; }
.items .sel-row td:nth-child(2) { background: linear-gradient(90deg, #303030 36px, #9d9d9d 36px); color: #242424; font-weight: 500; }
.items .rest td { height: auto; border-bottom: 0; }
.cell { display: flex; align-items: center; gap: 13px; padding-left: 5px; width: 66px; }
.items td:first-child { overflow: visible; position: relative; z-index: 1; }
.sel-row .cell { padding-left: 32px; }
.compico { width: 32px; height: 26px; }
.folderico { width: 28px; height: 24px; }
.flowico { width: 26px; height: 24px; }
.projbar { display: flex; align-items: center; height: 36px; margin: 0 2px; padding-left: 6px; border-top: 2px solid #000; }
.projbar button { margin-right: 18px; }
.bpc { width: 90px; height: 30px; border: 2px solid #303030; border-radius: 4px; background: #1d1d1d; font-size: 18px; line-height: 24px; }
.projbar .bpc { margin-right: 10px; }
.projbar .bpc + button { margin-right: 14px; }
.scroll { flex: 1; height: 34px; margin-right: 34px; padding: 2px; background: #1c1c1c; }
.scroll i { display: block; width: 140px; height: 30px; border-radius: 15px; background: #303030; }

.viewer { flex: 1; min-width: 0; border: 2px solid #388cd8; }
.viewer .tabs { height: 50px; padding: 6px 0 0 20px; }
.viewer .tab.active { gap: 19px; }
.viewer .tab em { color: var(--blue); }
.viewer .tab.idle { gap: 6px; padding: 0 71px; color: #868686; }
.viewer .unlock { width: 16px; height: 22px; }
.crumbs { height: 56px; padding: 9px 0 0 37px; border-bottom: 2px solid #333; box-shadow: inset 0 -2px #000; }
.crumbs button { width: 138px; height: 34px; padding-left: 15px; text-align: left; background: var(--field); border: 2px solid #303030; border-radius: 4px; color: var(--blue); line-height: 28px; }
.stage { flex: 1; position: relative; background: #000; }
.solid { position: absolute; width: 20px; height: 20px; }
.s-red { left: calc(50% - 54px); top: calc(50% - 68px); background: #f00; }
.s-blue { left: calc(50% - 478px); top: calc(50% + 86px); background: #0a8af5; }
.stage p { position: absolute; right: calc(50% - 354px); font: 700 44px/52px Lato, sans-serif; letter-spacing: 6px; color: #636363; white-space: nowrap; }
.t1 { top: calc(50% - 27px); }
.t2 { top: calc(50% + 119px); }
.pick { display: grid; align-items: center; background: #1d1d1d; border: 2px solid #303030; border-radius: 4px; height: 36px; color: var(--bright); }
.pick select { grid-area: 1 / 1; appearance: none; width: 100%; height: 100%; padding-left: 12px; }
.pick svg { grid-area: 1 / 1; justify-self: end; margin-right: 9px; pointer-events: none; }
.pick option { background: #1d1d1d; }
.viewbar { display: flex; align-items: center; height: 52px; padding: 9px 0 0 9px; background: linear-gradient(#1a1a1a, #1a1a1a) 0 8px / 100% 2px no-repeat; }
.viewbar .sep { width: 4px; height: 30px; margin: 0 9px; }
.p-zoom { width: 138px; }
.p-res { width: 178px; }
.vb { width: 40px; height: 36px; margin-right: 4px; display: flex; align-items: center; justify-content: center; border-radius: 4px; }
.vb.dark { background: #131313; }
.vb.blue-ico svg { color: var(--accent); }
.vb.faint svg { color: #3f3f3f; }
.expo { width: 64px; color: var(--blue); }
.time { width: 138px; height: 36px; border: 2px solid #303030; border-radius: 4px; background: #1d1d1d; line-height: 28px; }
.vb.faint { margin-right: 0; }

.side { width: 436px; padding-right: 24px; background: #212121; }
.stack { display: flex; flex-direction: column; height: 100%; padding: 0 2px; background: var(--panel); }
.acc { height: 60px; flex: none; padding: 4px 0 0 22px; text-align: left; border-bottom: 4px solid var(--gap); }
.acc:first-child { height: 58px; }
.character { padding: 0 10px 0 8px; border-bottom: 2px solid #111; }
.character h2 { display: flex; align-items: center; justify-content: space-between; height: 62px; padding: 0 10px 0 14px; font-size: 21px; line-height: 26px; color: var(--bright); }
.fontrow { display: flex; gap: 8px; padding: 12px 0 11px; border-bottom: 2px solid var(--line); }
.fonts { display: flex; flex-direction: column; gap: 12px; width: 246px; }
.pick.split { grid-template-columns: 1fr; background: linear-gradient(#303030, #303030) right 34px center / 2px 100% no-repeat #161616; height: 37px; }
.inks { display: flex; flex-direction: column; align-items: center; gap: 14px; width: 40px; }
.bw { width: 40px; height: 34px; border: 2px solid var(--icon); background: linear-gradient(#000 15px, #b4b4b4 15px 17px, #fff 17px); }
.swatches { position: relative; width: 86px; }
.fill-sw { position: absolute; left: 2px; top: 0; width: 60px; height: 60px; border: 2px solid #000; background: #636363; }
.stroke-sw { position: absolute; left: 28px; top: 26px; width: 60px; height: 60px; }
.none-sw { position: absolute; left: 4px; top: 61px; width: 22px; height: 22px; }
.swap-sw { position: absolute; left: 64px; top: 4px; width: 24px; height: 22px; }
.metrics { display: grid; grid-template-columns: 50px 90px 70px 65px 90px 1fr; grid-auto-rows: 42px; align-items: center; padding: 3px 0 12px; border-bottom: 2px solid var(--line); }
.m2 { grid-auto-rows: 36px; padding: 9px 0 15px; }
.m3 { grid-auto-rows: 44px; padding: 2px 0 12px; }
.metrics > .i12 { width: 14px; height: 14px; color: #9a9a9a; }
.metrics > .i28 { justify-self: start; margin-left: 3px; }
.val { color: var(--blue); white-space: nowrap; }
.val i { color: #868686; }
.val.off { color: #555; }
.pick.empty { grid-column: 4 / -1; margin-left: -48px; }
.ti { display: flex; align-items: baseline; font: 700 34px/36px "DejaVu Serif", serif; color: var(--icon); }
.ti small { font-size: 16px; line-height: 20px; }
.ti .ud { align-self: center; margin-right: 2px; }
.ud { width: 10px; height: 28px; }
.lead { display: flex; align-items: center; gap: 2px; color: var(--icon); }
.lead .ud { height: 20px; margin-top: 12px; }
.lead u { display: block; width: 22px; text-align: center; text-decoration: none; border-bottom: 2px solid var(--icon); font: 19px/16px "Noto Sans", sans-serif; }
.track { display: flex; flex-direction: column; align-items: center; width: 36px; color: var(--icon); font: 700 28px/25px "DejaVu Serif", serif; gap: 3px; }
.track b { width: 36px; text-align: center; background: var(--icon); color: #222; font: 700 24px/22px "Liberation Serif", serif; }
.track.kern { font: 23px/23px "Noto Sans", sans-serif; white-space: nowrap; }
.lr { width: 36px; height: 8px; }
.track.tsume { font: 700 20px/22px "Noto Sans CJK JP", sans-serif; gap: 2px; }
.tsume span { padding: 0 1px; border: dotted var(--icon); border-width: 0 2px; }
.base { color: var(--icon); font: 26px/28px "Noto Sans", sans-serif; }
.base sup { font-size: 18px; line-height: 18px; text-decoration: underline; }
.faux { display: grid; grid-template-columns: 52px 52px 50px 64px 50px auto; align-items: center; height: 64px; padding: 0 0 8px 52px; }
.faux button { color: var(--icon); font: 700 29px/30px "Liberation Serif", serif; text-align: left; white-space: nowrap; }
.faux .heavy { font: 700 28px/30px "DejaVu Serif", serif; }
.faux .ital { font-style: italic; }
.faux small { font-size: 22px; }
.faux sup, .faux sub { font-size: 16px; line-height: 16px; }

.timeline { margin: 0 2px; background: var(--panel); display: flex; flex-direction: column; }
.timeline .tabs { padding: 5px 0 0 22px; }
.timeline .tab { gap: 21px; color: var(--bright); }
.tl { display: grid; grid-template-columns: minmax(0, 1fr) 929px; }
.tl-left { display: flex; flex-direction: column; padding-left: 2px; }
.tl-head { display: flex; align-items: center; height: 74px; }
.clock { width: 199px; padding: 5px 0 0 23px; display: flex; flex-direction: column; }
.clock strong { font-size: 30px; line-height: 30px; font-weight: 600; color: #3f9ee8; }
.clock span { font-size: 19px; line-height: 26px; margin-left: -4px; color: #236497; white-space: nowrap; }
.tl-head .search { flex: 1; }
.tl-tools { display: flex; align-items: center; gap: 22px; width: 336px; padding-left: 32px; }
.tl-tools button:first-child { margin-right: 11px; }
.tl-tools button:last-child { margin-left: 16px; }
.k1 { width: 134px; } .k2 { width: 65px; } .k3 { width: 66px; } .k5 { width: 200px; } .k6 { width: 149px; } .k7 { width: 36px; }
.k8 { width: 147px; } .k9 { width: 298px; } .k10 { width: 234px; } .k11 { width: 122px; } .k12 { width: 32px; }
.layers th { padding: 1px 0 0 11px; }
.layers th:nth-child(1) { padding-left: 8px; }
.layers th:nth-child(9) { padding-left: 9px; }
.layers th:nth-child(8) { padding-left: 10px; }
.tagico { margin-left: 17px; }
.grid { display: flex; gap: 4px; }
.grid i { width: 26px; height: 26px; display: flex; align-items: center; justify-content: center; }
.grid .fx { font: italic 29px/26px "Liberation Serif", serif; color: var(--icon); }
.box { display: flex; align-items: center; justify-content: center; width: 26px; height: 26px; background: #212121; }
.box.off svg { color: #777; }
.layers td { height: 34px; border-bottom: 2px solid #202020; white-space: nowrap; }
.layer td { background: #303030; }
.prop td { background: #262626; padding-top: 1px; }
.layers td:nth-child(1) { padding-left: 8px; }
.lab { display: flex; align-items: center; gap: 10px; padding-left: 10px; }
.lab i { width: 24px; height: 24px; background: #b43836; }
.num { padding-left: 13px; font-weight: 600; }
.name { display: flex; align-items: center; gap: 10px; padding-left: 5px; font-weight: 600; }
.name i { width: 28px; height: 28px; border: 2px solid #000; }
.name .tico { border: 0; text-align: center; font: 700 26px/28px "Liberation Serif", serif; color: var(--icon); }
.sw-red { background: #f20d1a; }
.sw-blue { background: #0d8af2; }
.pick.flat { height: 28px; border: 0; border-radius: 0; width: 136px; margin-left: 7px; }
.layer td:nth-child(7) { padding-left: 4px; }
.layer td:nth-child(9) { padding-left: 9px; }
.parent { display: flex; align-items: center; gap: 13px; padding-left: 10px; }
.parent .pick.flat { width: 178px; margin: 0; }
.blue { padding-left: 11px; color: var(--blue); }
.blue b { color: #868686; }
.pw { margin-left: 36px; }
.pname { display: flex; align-items: center; gap: 8px; padding-left: 39px; }
.pname i { width: 32px; height: 30px; display: flex; align-items: center; justify-content: center; }
.pname .on { border: 2px solid #303030; border-radius: 3px; }
.pname .on svg { color: var(--accent); }
.xp { padding-left: 7px; }
.keys { display: flex; align-items: center; gap: 9px; padding-left: 4px; }
.keys i { width: 28px; height: 28px; display: flex; align-items: center; justify-content: center; border: 2px solid #303030; border-radius: 3px; }
.keys i svg { color: var(--accent); }
.keys .off { color: #555; }
.status { margin-top: auto; display: flex; align-items: center; gap: 6px; height: 36px; padding-left: 8px; border-top: 2px solid #000; }
.sb { width: 32px; height: 32px; display: flex; align-items: center; justify-content: center; border: 2px solid #303030; border-radius: 3px; }
.sb svg { color: var(--accent); }
.status span { padding-left: 13px; }
.status b { color: #74dab4; font-weight: 600; }

.tl-right { display: grid; grid-template-columns: minmax(0, 1fr) 36px; grid-template-rows: 1fr auto; }
.time-area { position: relative; display: flex; flex-direction: column; padding-top: 14px; padding-left: 2px; overflow: hidden; }
.navbar { height: 20px; padding: 0 12px 0 13px; border: solid #000; border-width: 2px 0; border-radius: 12px; background: var(--accent); }
.navbar i, .workarea i { display: block; height: 100%; background: #676767; border: solid #000; border-width: 0 2px; }
.ruler { display: flex; justify-content: space-between; height: 38px; padding: 4px 14px; font-size: 18px; line-height: 22px; }
.ruler span { width: 0; display: flex; flex-direction: column; align-items: center; white-space: nowrap; }
.ruler i { width: 2px; height: 10px; margin-top: 2px; flex: none; background: #8a8a8a; }
.workarea { height: 34px; margin: 0 2px 0 3px; padding: 0 10px; border: solid #000; border-width: 2px 0; border-radius: 10px; background: var(--accent); }
.workarea i { background: #606060; }
.cache { height: 8px; padding: 0 14px 0 15px; border-bottom: 2px solid #000; }
.cache i { display: block; height: 6px; background: #10c020; }
.tracks { flex: 1; display: flex; flex-direction: column; min-height: 302px; margin-left: -2px; border-left: 2px solid #000; }
.lane { height: 34px; padding: 0 14px 0 15px; background: #303030; border-bottom: 2px solid #202020; }
.lane.p { display: flex; align-items: center; justify-content: space-between; background: linear-gradient(90deg, #292929 15px, #343434 15px calc(100% - 14px), #292929 calc(100% - 14px)); }
.lane span { width: 0; display: flex; justify-content: center; }
.lane .flip { transform: rotate(180deg); }
.lane.fillout { flex: 1; }
.bar { display: block; height: 32px; background: #7b3b3b; border-top: 2px solid #7f4b4b; border-bottom: 2px solid #5e2b2b; }
.ib { width: 14px; height: 22px; }
.playhead { position: absolute; left: 5px; top: 44px; bottom: 0; width: 22px; background: linear-gradient(#2e8ceb, #2e8ceb) center / 2px 100% no-repeat; }
.playhead svg { width: 22px; height: 28px; }
.gutter { display: flex; flex-direction: column; border-left: 2px solid #1d1d1d; }
.g-top { height: 114px; padding: 78px 0 0 3px; border-bottom: 2px solid #000; }
.g-btn { height: 34px; padding-top: 3px; }
.g-scroll { flex: 1; background: #222; }
.zoombar { grid-column: 1 / -1; display: flex; height: 36px; }
.zoomer { display: flex; align-items: center; width: 215px; padding-left: 11px; border-top: 2px solid #000; }
.m-s { width: 20px; height: 10px; }
.m-b { width: 34px; height: 16px; }
.zoomer input { appearance: none; width: 96px; height: 20px; margin: 0 22px; background: linear-gradient(#444, #444) center / 100% 4px no-repeat; }
.zoomer input::-webkit-slider-thumb { appearance: none; width: 20px; height: 20px; border: 4px solid #8e8e8e; border-radius: 50%; background: #282828; }
.hscroll { flex: 1; margin: 0 36px 2px 0; background: #222; }
```
